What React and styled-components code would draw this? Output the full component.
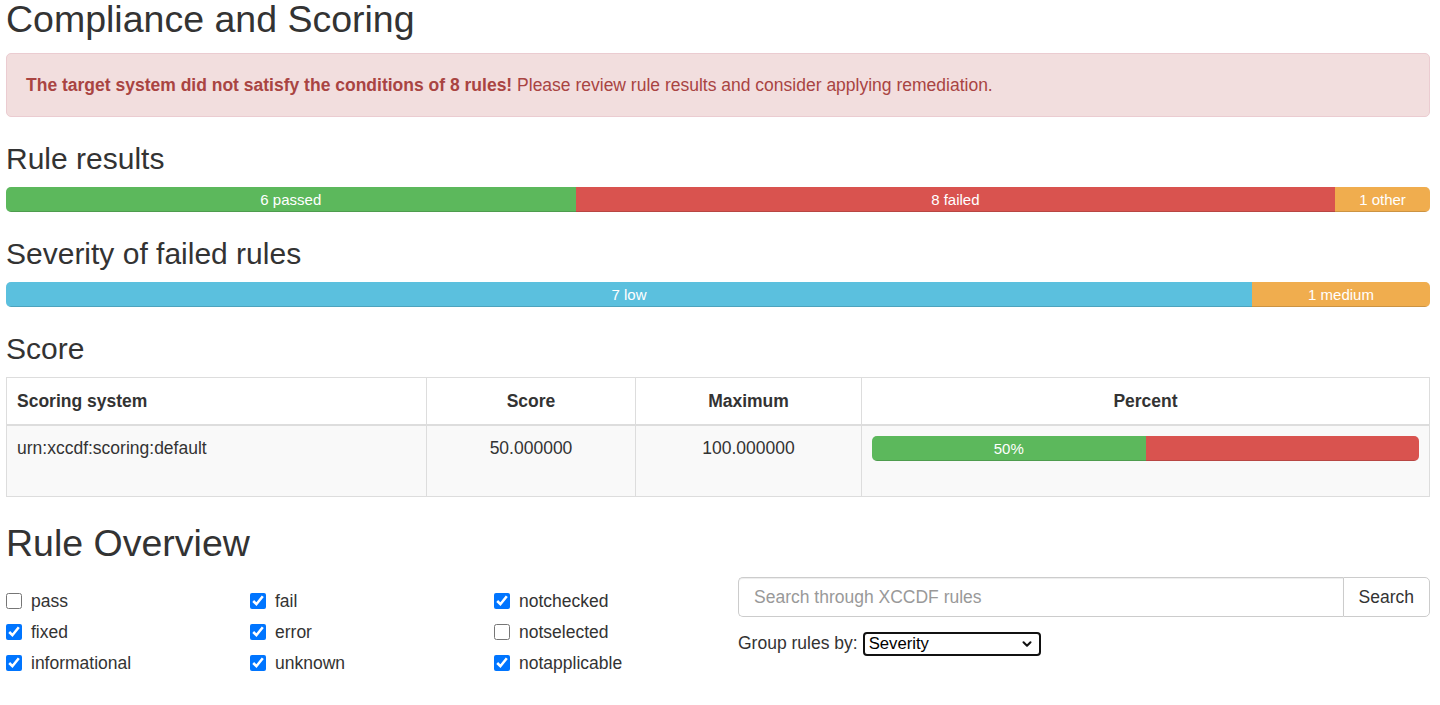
import React from 'react'
import styled, { createGlobalStyle } from 'styled-components'
import { ChevronDown } from 'lucide-react'

const GlobalStyle = createGlobalStyle`
  html, body {
    margin: 0;
    padding: 0;
    background: #fff;
  }
  body {
    font-family: 'Liberation Sans', Arial, Helvetica, sans-serif;
    font-size: 17.5px;
    line-height: 1.42857;
    color: #333;
    overflow: hidden;
  }
  * { box-sizing: border-box; }
`

const Page = styled.div`
  padding: 0 10px 0 6px;
`

const Title = styled.h2`
  font-size: 37.5px;
  font-weight: 500;
  line-height: 1.1;
  margin: ${props => props.$top}px 0 12.5px;
`

const SubTitle = styled.h3`
  font-size: 30px;
  font-weight: 500;
  line-height: 1.1;
  margin: 25px 0 12px;
`

const Alert = styled.div`
  padding: 18.75px 19px 18.25px;
  margin-bottom: 25px;
  background: #f2dede;
  border: 1px solid #ebccd1;
  border-radius: 5px;
  color: #a94442;
  strong { font-weight: 700; }
`

const Progress = styled.div`
  display: flex;
  height: 25px;
  margin-bottom: 25px;
  overflow: hidden;
  background: #f5f5f5;
  border-radius: 5px;
  box-shadow: inset 0 1px 2px rgba(0,0,0,.1);
`

const Bar = styled.div`
  height: 100%;
  font-size: 15px;
  line-height: 25px;
  color: #fff;
  text-align: center;
  white-space: nowrap;
  background: ${props => props.$color};
  box-shadow: inset 0 -1px 0 rgba(0,0,0,.15);
`

const Table = styled.table`
  width: 100%;
  border-collapse: collapse;
  border-spacing: 0;
  margin-bottom: 26px;
  border: 1px solid #ddd;
`

const Th = styled.th`
  width: ${props => props.$w}px;
  padding: 11px 10px 10px;
  border: 1px solid #ddd;
  border-bottom: 2px solid #ddd;
  text-align: ${props => props.$left ? 'left' : 'center'};
  font-weight: 700;
  vertical-align: bottom;
  background: #fff;
`

const Td = styled.td`
  padding: 10px;
  border: 1px solid #ddd;
  vertical-align: top;
  text-align: ${props => props.$left ? 'left' : 'center'};
  background: #f9f9f9;
  ${Progress} { margin-bottom: 25px; }
`

const OverviewRow = styled.div`
  display: grid;
  grid-template-columns: 714px 1fr;
  column-gap: 18px;
`

const Filters = styled.div`
  display: grid;
  grid-template-columns: repeat(3, 244px);
  row-gap: 6px;
  margin-top: 12.5px;
`

const SearchColumn = styled.div`
  padding-top: 1px;
`

const Check = styled.label`
  display: flex;
  align-items: center;
  gap: 9px;
  line-height: 25px;
  font-weight: 400;
  input {
    width: 16px;
    height: 16px;
    margin: 0;
  }
`

const InputGroup = styled.div`
  display: flex;
  height: 40px;
`

const SearchInput = styled.input`
  flex: 1;
  height: 100%;
  padding: 0 15px;
  font: inherit;
  font-size: 17.5px;
  color: #555;
  border: 1px solid #ccc;
  border-right: 0;
  border-radius: 5px 0 0 5px;
  box-shadow: inset 0 1px 1px rgba(0,0,0,.075);
  outline: none;
  &::placeholder { color: #999; }
`

const SearchButton = styled.button`
  height: 100%;
  padding: 0 15px;
  font: inherit;
  font-size: 17.5px;
  color: #333;
  background: #fff;
  border: 1px solid #ccc;
  border-radius: 0 5px 5px 0;
`

const GroupLine = styled.div`
  display: flex;
  align-items: center;
  margin-top: 14px;
  line-height: 25px;
`

const SelectWrap = styled.span`
  position: relative;
  display: inline-flex;
  margin-left: 5px;
`

const Select = styled.select`
  appearance: none;
  width: 178px;
  height: 24px;
  padding: 0 0 0 4px;
  font-family: 'Liberation Sans', Arial, sans-serif;
  font-size: 16.7px;
  color: #000;
  background: #fff;
  border: 2px solid #111;
  border-radius: 4px;
  outline: none;
`

const Chevron = styled.span`
  position: absolute;
  right: 7px;
  top: 5px;
  display: flex;
  pointer-events: none;
  color: #111;
`

const ruleResults = [
  { value: 6, color: '#5cb85c', label: '6 passed' },
  { value: 8, color: '#d9534f', label: '8 failed' },
  { value: 1, color: '#f0ad4e', label: '1 other' },
]

const severity = [
  { value: 7, color: '#5bc0de', label: '7 low' },
  { value: 1, color: '#f0ad4e', label: '1 medium' },
]

const scoreBar = [
  { value: 50, color: '#5cb85c', label: '50%' },
  { value: 50, color: '#d9534f', label: '' },
]

const filters = [
  ['pass', false], ['fail', true], ['notchecked', true],
  ['fixed', true], ['error', true], ['notselected', false],
  ['informational', true], ['unknown', true], ['notapplicable', true],
]

const StackedBar = ({ items }) => {
  const total = items.reduce((s, i) => s + i.value, 0)
  return (
    <Progress>
      {items.map(i => (
        <Bar key={i.color + i.label} $color={i.color} style={{ width: `${(i.value / total) * 100}%` }}>
          {i.label}
        </Bar>
      ))}
    </Progress>
  )
}

export default function App () {
  return (
    <Page>
      <GlobalStyle/>
      <Title $top={-1}>Compliance and Scoring</Title>
      <Alert>
        <strong>The target system did not satisfy the conditions of 8 rules!</strong> Please review rule results and consider applying remediation.
      </Alert>

      <SubTitle>Rule results</SubTitle>
      <StackedBar items={ruleResults}/>

      <SubTitle>Severity of failed rules</SubTitle>
      <StackedBar items={severity}/>

      <SubTitle>Score</SubTitle>
      <Table>
        <thead>
          <tr>
            <Th $left $w={420}>Scoring system</Th>
            <Th $w={209}>Score</Th>
            <Th $w={226}>Maximum</Th>
            <Th>Percent</Th>
          </tr>
        </thead>
        <tbody>
          <tr>
            <Td $left>urn:xccdf:scoring:default</Td>
            <Td>50.000000</Td>
            <Td>100.000000</Td>
            <Td><StackedBar items={scoreBar}/></Td>
          </tr>
        </tbody>
      </Table>

      <Title $top={26}>Rule Overview</Title>
      <OverviewRow>
        <Filters>
          {filters.map(([name, checked]) => (
            <Check key={name}>
              <input type="checkbox" defaultChecked={checked}/>
              {name}
            </Check>
          ))}
        </Filters>
        <SearchColumn>
          <InputGroup>
            <SearchInput placeholder="Search through XCCDF rules"/>
            <SearchButton type="button">Search</SearchButton>
          </InputGroup>
          <GroupLine>
            Group rules by:
            <SelectWrap>
              <Select defaultValue="severity">
                <option value="severity">Severity</option>
                <option value="result">Result</option>
                <option value="none">Default</option>
              </Select>
              <Chevron><ChevronDown size={14} strokeWidth={3.5}/></Chevron>
            </SelectWrap>
          </GroupLine>
        </SearchColumn>
      </OverviewRow>
    </Page>
  )
}
